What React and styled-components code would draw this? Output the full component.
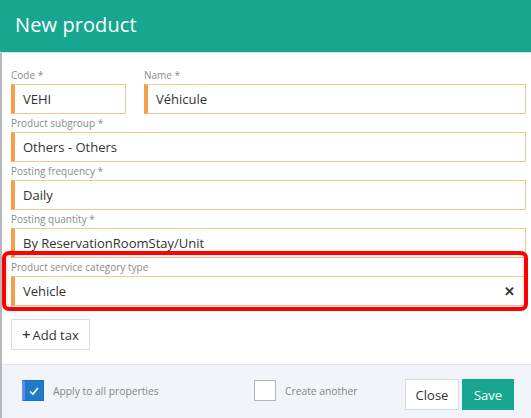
import React from "react";
import styled, { createGlobalStyle } from "styled-components";

const GlobalStyle = createGlobalStyle`
  html, body {
    margin: 0;
    padding: 0;
    background: #ffffff;
    font-family: "Open Sans", "Noto Sans", sans-serif;
  }
  * {
    box-sizing: border-box;
  }
`;

const Dialog = styled.div`
  width: 531px;
  height: 418px;
  overflow: hidden;
  display: flex;
  flex-direction: column;
  background: #ffffff;
`;

const Header = styled.div`
  height: 53px;
  flex-shrink: 0;
  background: #17a690;
  border-bottom: 1px solid #cfe7e3;
  display: flex;
  align-items: center;
  padding: 0 15px 3px;
`;

const Title = styled.h1`
  margin: 0;
  font-size: 20px;
  font-weight: 400;
  color: #ffffff;
  letter-spacing: 0.1px;
`;

const Body = styled.div`
  flex: 1;
  display: flex;
  flex-direction: column;
  border-left: 2px solid #b8b8b8;
`;

const Form = styled.div`
  display: flex;
  flex-direction: column;
  padding: 13px 5px 14px 9px;
`;

const Row = styled.div`
  display: flex;
  gap: 18px;
`;

const Field = styled.div`
  position: relative;
  display: flex;
  flex-direction: column;
  width: ${(p) => p.width || "auto"};
  flex: ${(p) => (p.width ? "none" : "1")};
`;

const Label = styled.label`
  height: 18px;
  line-height: 18px;
  font-size: 10px;
  color: #8a8a8a;
  white-space: nowrap;
`;

const Input = styled.div`
  height: 30px;
  display: flex;
  align-items: center;
  justify-content: space-between;
  border: 1px solid #f7c78c;
  border-left: 4px solid #f2a14a;
  padding: 0 10px 0 8px;
  font-size: 13px;
  color: #333333;
  background: #ffffff;
`;

const Clear = styled.span`
  font-size: 13px;
  font-weight: 700;
  color: #333333;
  line-height: 1;
`;

const Highlight = styled.div`
  position: absolute;
  top: -7px;
  bottom: -5px;
  left: -9px;
  right: -2px;
  border: 4px solid #ff0000;
  border-radius: 7px;
  box-shadow: inset 0 0 4px rgba(0, 0, 0, 0.18);
  pointer-events: none;
`;

const AddTax = styled.button`
  align-self: flex-start;
  margin: 13px 0 0 0;
  height: 31px;
  width: 79px;
  padding: 0 10px;
  display: flex;
  align-items: center;
  gap: 2px;
  background: #ffffff;
  border: 1px solid #dcdcdc;
  font-family: "Open Sans", sans-serif;
  font-size: 13px;
  color: #333333;
`;

const Plus = styled.span`
  font-size: 15px;
  font-weight: 600;
  line-height: 1;
`;

const Footer = styled.div`
  flex: 1;
  display: flex;
  align-items: flex-start;
  background: #f1f5f9;
  border-top: 1px solid #e1e6ec;
  padding: 14px 17px 0 20px;
`;

const Check = styled.label`
  display: flex;
  align-items: center;
  gap: 9px;
  margin-top: 1px;
  width: ${(p) => p.width};
  font-size: 10.3px;
  color: #858585;
`;

const Box = styled.span`
  width: 22px;
  height: 21px;
  display: flex;
  align-items: center;
  justify-content: center;
  background: ${(p) => (p.checked ? "#1e7acb" : "#ffffff")};
  border: 1px solid ${(p) => (p.checked ? "#1e6fb8" : "#b5b5b5")};
  border-left: ${(p) => (p.checked ? "3px solid #5b8fe6" : "1px solid #b5b5b5")};
`;

const Buttons = styled.div`
  margin-left: auto;
  display: flex;
  gap: 3px;
`;

const Button = styled.button`
  height: 31px;
  width: ${(p) => (p.primary ? "52px" : "54px")};
  padding: 0;
  font-family: "Open Sans", sans-serif;
  font-size: 13px;
  border: 1px solid ${(p) => (p.primary ? "#17a690" : "#dcdcdc")};
  background: ${(p) => (p.primary ? "#17a690" : "#ffffff")};
  color: ${(p) => (p.primary ? "#ffffff" : "#333333")};
`;

export default function App() {
  return (
    <>
      <GlobalStyle />
      <Dialog>
        <Header>
          <Title>New product</Title>
        </Header>
        <Body>
          <Form>
            <Row>
              <Field width="115px">
                <Label>Code *</Label>
                <Input>VEHI</Input>
              </Field>
              <Field>
                <Label>Name *</Label>
                <Input>Véhicule</Input>
              </Field>
            </Row>
            <Field>
              <Label>Product subgroup *</Label>
              <Input>Others - Others</Input>
            </Field>
            <Field>
              <Label>Posting frequency *</Label>
              <Input>Daily</Input>
            </Field>
            <Field>
              <Label>Posting quantity *</Label>
              <Input>By ReservationRoomStay/Unit</Input>
            </Field>
            <Field>
              <Label>Product service category type</Label>
              <Input>
                Vehicle
                <Clear>✕</Clear>
              </Input>
              <Highlight />
            </Field>
            <AddTax>
              <Plus>+</Plus>Add tax
            </AddTax>
          </Form>
          <Footer>
            <Check width="232px">
              <Box checked>
                <svg width="12" height="12" viewBox="0 0 12 12">
                  <path d="M2 6.5 L5 9 L10 3" fill="none" stroke="#ffffff" strokeWidth="1.6" />
                </svg>
              </Box>
              Apply to all properties
            </Check>
            <Check width="auto">
              <Box />
              Create another
            </Check>
            <Buttons>
              <Button>Close</Button>
              <Button primary>Save</Button>
            </Buttons>
          </Footer>
        </Body>
      </Dialog>
    </>
  );
}
